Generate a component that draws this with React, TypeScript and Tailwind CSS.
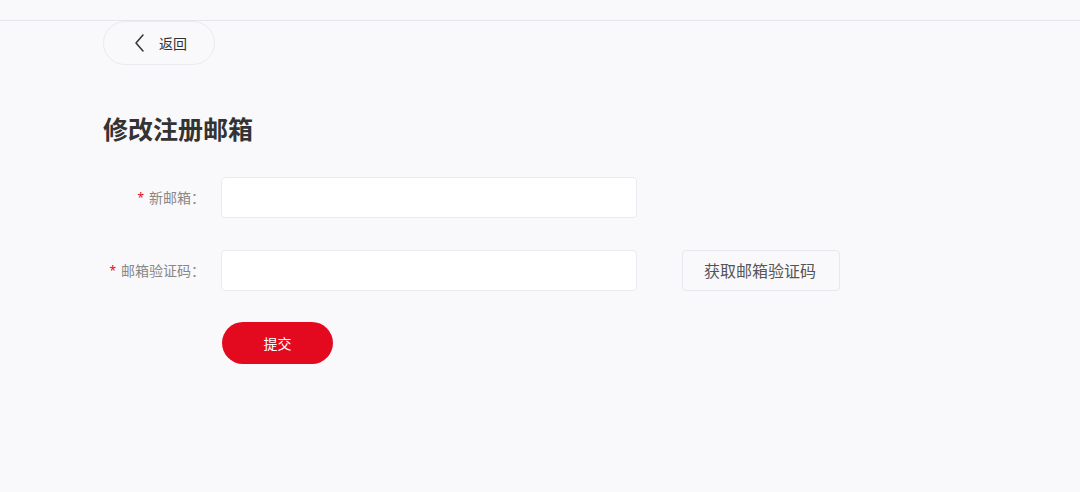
import React from 'react';

const font = { fontFamily: '"Noto Sans", "Noto Sans CJK SC", sans-serif' };

export default function App() {
  return (
    <div className="min-h-[492px] w-full bg-[#f9f8fb] text-[#333]" style={font}>
      <div className="h-[21px] border-b border-[#e6e5ea]" />
      <div className="pl-[103px]">
        <button className="flex h-[44px] w-[112px] items-center rounded-full border border-[#ebeaef] bg-[#f9f8fb] pl-[29px] text-[14px] text-[#333]">
          <svg width="14" height="20" viewBox="0 0 14 20" fill="none" className="mr-[12px]">
            <path d="M10 2 L3 10 L10 18" stroke="#333" strokeWidth="1.5" strokeLinecap="round" strokeLinejoin="round" />
          </svg>
          返回
        </button>

        <h1 className="mt-[47px] text-[25px] font-bold leading-[34px] text-[#333]">修改注册邮箱</h1>

        <div className="mt-[31px] flex flex-col gap-[32px]">
          <div className="flex items-center">
            <label className="flex w-[118px] items-center justify-end pr-[16px] text-[14px] text-[#888]">
              <span className="mr-[5px] text-[12px] text-[#e30a20]">*</span>新邮箱：
            </label>
            <input className="h-[41px] w-[416px] rounded-[4px] border border-[#ebeaef] bg-white px-3 outline-none" />
          </div>
          <div className="flex items-center">
            <label className="flex w-[118px] items-center justify-end pr-[16px] text-[14px] text-[#888]">
              <span className="mr-[5px] text-[12px] text-[#e30a20]">*</span>邮箱验证码：
            </label>
            <input className="h-[41px] w-[416px] rounded-[4px] border border-[#ebeaef] bg-white px-3 outline-none" />
            <button className="ml-[45px] h-[41px] w-[158px] rounded-[4px] border border-[#e8e7ec] bg-[#f9f8fb] pr-[2px] text-[16px] text-[#555]">
              获取邮箱验证码
            </button>
          </div>
        </div>

        <button className="ml-[119px] mt-[31px] h-[42px] w-[111px] rounded-full bg-[#e30a20] text-[14px] text-white">
          提交
        </button>
      </div>
    </div>
  );
}
